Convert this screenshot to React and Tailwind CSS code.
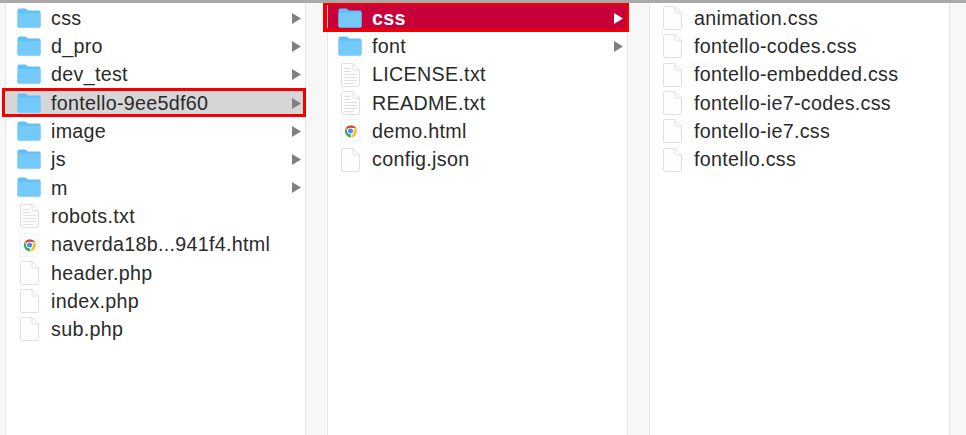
import React from 'react'

const FolderIcon = () => (
  <svg width="24" height="20" viewBox="0 0 24 20" className="shrink-0 -mt-[1px]">
    <path d="M0.5 2.5 Q0.5 0.5 2.5 0.5 L8 0.5 Q9.5 0.5 10.5 2 L11 2.5 L22 2.5 Q23.5 2.5 23.5 4 L23.5 18 Q23.5 19.5 22 19.5 L2 19.5 Q0.5 19.5 0.5 18 Z" fill="#62c0f6" />
    <path d="M0.5 5 L23.5 5 L23.5 18 Q23.5 19.5 22 19.5 L2 19.5 Q0.5 19.5 0.5 18 Z" fill="#74cbfb" />
  </svg>
)

const FileIcon = ({ lines }) => (
  <svg width="19" height="24" viewBox="0 0 19 24" className="shrink-0">
    <path d="M1.5 0.5 L12 0.5 L18.5 7 L18.5 22 Q18.5 23.5 17 23.5 L2 23.5 Q0.5 23.5 0.5 22 L0.5 1.5 Q0.5 0.5 1.5 0.5 Z" fill="#fdfdfd" stroke="#e0e0e0" />
    <path d="M12 0.5 L12 5.5 Q12 7 13.5 7 L18.5 7" fill="none" stroke="#e0e0e0" />
    {lines && (
      <g stroke="#e0e0e0" strokeWidth="1">
        <path d="M3 5.5 H9" />
        <path d="M3 8.5 H10" />
        <path d="M3 11.5 H16" />
        <path d="M3 14.5 H16" />
        <path d="M3 17.5 H16" />
        <path d="M3 20.5 H13" />
      </g>
    )}
  </svg>
)

const ChromeIcon = () => (
  <svg width="19" height="24" viewBox="0 0 19 24" className="shrink-0">
    <rect x="0.5" y="0.5" width="18" height="23" rx="1.5" fill="#fdfdfd" stroke="#f3f3f3" />
    <path d="M9.5 12 L4.6 9.1 A6.5 6.5 0 0 1 15.2 9 L9.5 9 Z" fill="#dc4437" />
    <path d="M9.5 12 L15.2 9 A6.5 6.5 0 0 1 10 18.5 L12.5 13.5 Z" fill="#f6c02c" />
    <path d="M9.5 12 L10 18.5 A6.5 6.5 0 0 1 4.6 9.1 L7.5 14 Z" fill="#3da55c" />
    <circle cx="9.5" cy="12" r="3.3" fill="#ffffff" />
    <circle cx="9.5" cy="12" r="2.5" fill="#4a8af0" />
  </svg>
)

const Arrow = ({ white }) => (
  <svg width="9" height="11" viewBox="0 0 9 11" className="shrink-0">
    <path d="M0 0 L9 5.5 L0 11 Z" fill={white ? '#ffffff' : '#808080'} />
  </svg>
)

const Row = ({ name, icon, arrow, grey, active, inset }) => {
  let rowClass = 'relative h-[28.3px] flex items-center pr-[4px] gap-[10px] text-[#2a2a2a]'
  if (grey) rowClass = 'relative h-[28.3px] flex items-center pr-[4px] gap-[10px] text-[#2a2a2a] bg-[#d6d6d6]'
  if (active) rowClass = 'relative h-[28.3px] flex items-center pr-[4px] gap-[10px] text-white font-bold bg-[#c8003a]'

  return (
    <div className={rowClass + (inset ? ' pl-[11px]' : ' pl-[10px]')}>
      {grey && <span className="absolute -left-[4px] -right-[1px] -top-[1px] bottom-0 border-[3px] border-[#f20000]" />}
      {active && <span className="absolute -left-[5px] -right-[2px] -top-[2px] bottom-0 border-[3px] border-l-[5px] border-[#f20000]" />}
      {active && <span className="absolute -left-[1px] top-[1px] bottom-[4px] w-px bg-[#ffc4c4]" />}
      <span className="relative w-[24px] flex justify-center shrink-0">
        {icon === 'folder' && <FolderIcon />}
        {icon === 'doc' && <FileIcon lines />}
        {icon === 'blank' && <FileIcon />}
        {icon === 'chrome' && <ChromeIcon />}
      </span>
      <span className="relative flex-1 whitespace-nowrap pt-[1px]">{name}</span>
      {arrow && <span className="relative flex"><Arrow white={active} /></span>}
    </div>
  )
}

const col1 = [
  { name: 'css', icon: 'folder', arrow: true },
  { name: 'd_pro', icon: 'folder', arrow: true },
  { name: 'dev_test', icon: 'folder', arrow: true },
  { name: 'fontello-9ee5df60', icon: 'folder', arrow: true, grey: true },
  { name: 'image', icon: 'folder', arrow: true },
  { name: 'js', icon: 'folder', arrow: true },
  { name: 'm', icon: 'folder', arrow: true },
  { name: 'robots.txt', icon: 'doc' },
  { name: 'naverda18b...941f4.html', icon: 'chrome' },
  { name: 'header.php', icon: 'blank' },
  { name: 'index.php', icon: 'blank' },
  { name: 'sub.php', icon: 'blank' },
]

const col2 = [
  { name: 'css', icon: 'folder', arrow: true, active: true },
  { name: 'font', icon: 'folder', arrow: true },
  { name: 'LICENSE.txt', icon: 'doc' },
  { name: 'README.txt', icon: 'doc' },
  { name: 'demo.html', icon: 'chrome' },
  { name: 'config.json', icon: 'blank' },
]

const col3 = [
  { name: 'animation.css', icon: 'blank' },
  { name: 'fontello-codes.css', icon: 'blank' },
  { name: 'fontello-embedded.css', icon: 'blank' },
  { name: 'fontello-ie7-codes.css', icon: 'blank' },
  { name: 'fontello-ie7.css', icon: 'blank' },
  { name: 'fontello.css', icon: 'blank' },
]

const Column = ({ items, inset }) => (
  <div className="w-[301px] shrink-0 bg-white border-x border-[#e6e6e6] pt-[1px]">
    {items.map((item) => (
      <Row key={item.name} inset={inset} {...item} />
    ))}
  </div>
)

const App = () => {
  return (
    <div className="w-[966px] h-[435px] overflow-hidden bg-[#f7f7f7] border-t-[3px] border-[#a9a9a9] flex gap-[21px] pl-[5px] font-['Liberation_Sans',sans-serif] text-[19.7px] tracking-[0.3px]">
      <Column items={col1} inset />
      <Column items={col2} />
      <Column items={col3} />
    </div>
  )
}

export default App
